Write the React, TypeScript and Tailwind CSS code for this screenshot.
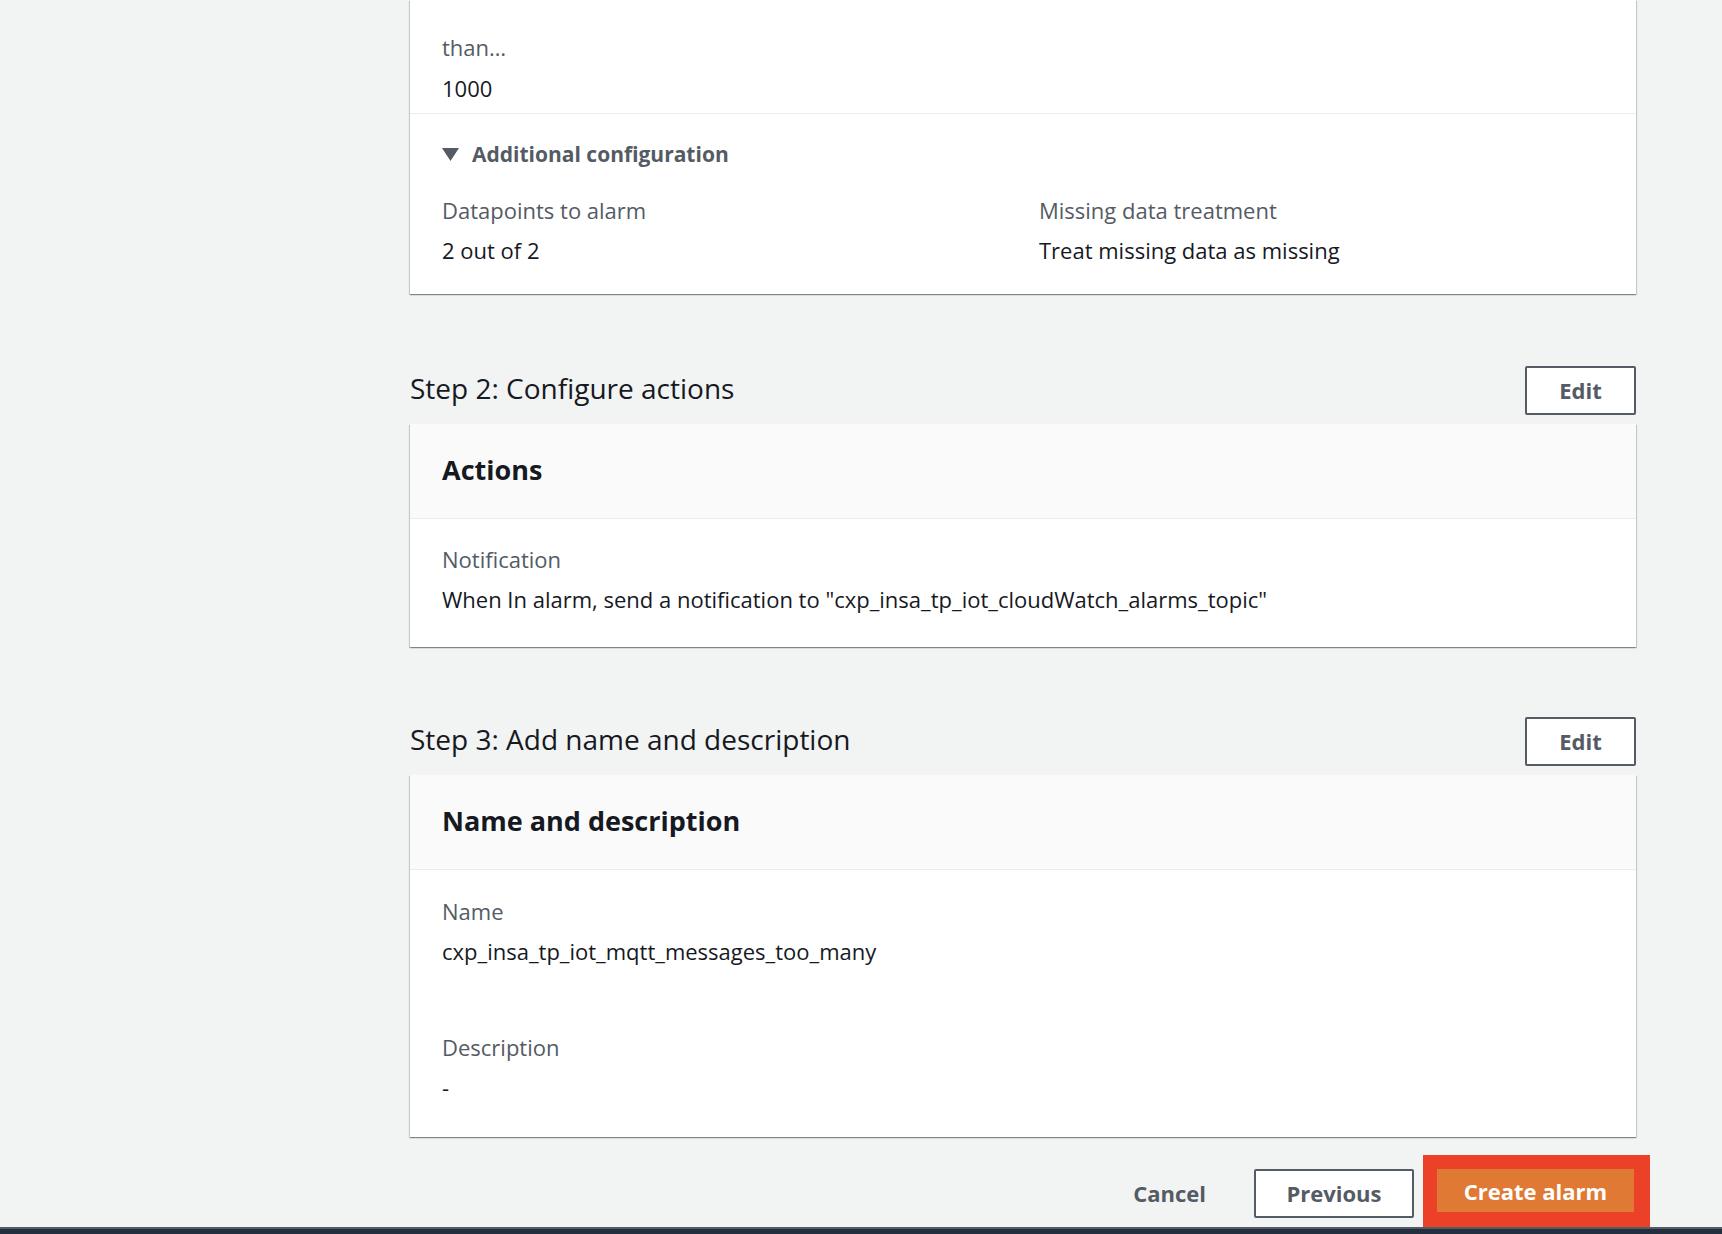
import React from "react";

const font = { fontFamily: '"Open Sans", "Noto Sans", sans-serif' };

function Field({ label, value }: { label: string; value: string }) {
  return (
    <div>
      <div className="text-[22px] leading-[30px] text-[#545b64]">{label}</div>
      <div className="mt-[10px] text-[22px] leading-[30px] text-[#16191f]">{value}</div>
    </div>
  );
}

function Card({ children, className = "" }: { children: React.ReactNode; className?: string }) {
  return (
    <div
      className={`bg-white shadow-[0_1px_1px_0_rgba(0,28,36,0.3),1px_1px_1px_0_rgba(0,28,36,0.15),-1px_1px_1px_0_rgba(0,28,36,0.15)] ${className}`}
    >
      {children}
    </div>
  );
}

function CardHeader({ title }: { title: string }) {
  return (
    <div className="flex h-[95px] items-center border-b border-[#eaeded] bg-[#fafafa] px-[32px]">
      <h2 className="mb-[2px] text-[27px] font-bold leading-[34px] text-[#16191f]">{title}</h2>
    </div>
  );
}

function StepHeader({ title }: { title: string }) {
  return (
    <div className="flex h-[49px] items-center justify-between">
      <h2 className="mb-[6px] text-[28px] leading-[36px] text-[#16191f]">{title}</h2>
      <button className="h-[49px] w-[111px] rounded-[2px] border-2 border-[#545b64] bg-white text-[22px] font-bold text-[#545b64]">
        Edit
      </button>
    </div>
  );
}

export default function App() {
  return (
    <div className="min-h-[1234px] bg-[#f2f3f3]" style={font}>
      <div className="ml-[410px] w-[1226px]">
        {/* Step 1 card (scrolled, top cut off) */}
        <Card>
          <div className="border-b border-[#eaeded] px-[32px] pt-[32px] pb-[10px]">
            <div className="text-[22px] leading-[30px] text-[#545b64]">than…</div>
            <div className="mt-[11px] text-[22px] leading-[30px] text-[#16191f]">1000</div>
          </div>
          <div className="px-[32px] pt-[25px] pb-[29px]">
            <div className="flex items-center gap-[13px] text-[21px] font-bold leading-[30px] text-[#545b64]">
              <svg width="17" height="13" viewBox="0 0 17 13">
                <polygon points="0,0 17,0 8.5,13" fill="#545b64" />
              </svg>
              Additional configuration
            </div>
            <div className="mt-[26px] grid grid-cols-2 gap-[32px]">
              <Field label="Datapoints to alarm" value="2 out of 2" />
              <Field label="Missing data treatment" value="Treat missing data as missing" />
            </div>
          </div>
        </Card>

        <div className="mt-[72px]">
          <StepHeader title="Step 2: Configure actions" />
        </div>
        <Card className="mt-[9px]">
          <CardHeader title="Actions" />
          <div className="px-[32px] pt-[25px] pb-[33px]">
            <Field
              label="Notification"
              value={'When In alarm, send a notification to "cxp_insa_tp_iot_cloudWatch_alarms_topic"'}
            />
          </div>
        </Card>

        <div className="mt-[70px]">
          <StepHeader title="Step 3: Add name and description" />
        </div>
        <Card className="mt-[9px]">
          <CardHeader title="Name and description" />
          <div className="px-[32px] pt-[26px] pb-[35px]">
            <Field label="Name" value="cxp_insa_tp_iot_mqtt_messages_too_many" />
            <div className="mt-[66px]">
              <Field label="Description" value="-" />
            </div>
          </div>
        </Card>

        <div className="mt-[32px] flex items-start justify-end">
          <button className="mr-[28px] h-[49px] px-[20px] text-[22px] font-bold text-[#545b64]">Cancel</button>
          <button className="h-[49px] w-[160px] rounded-[2px] border-2 border-[#545b64] bg-white text-[22px] font-bold text-[#545b64]">
            Previous
          </button>
          <div className="-mr-[14px] -mt-[14px] ml-[9px] bg-[#ea4128] pt-[14px] pr-[16px] pb-[15px] pl-[14px]">
            <button className="h-[43px] w-[197px] pt-[2px] bg-[#e07933] text-[22px] font-bold text-white">Create alarm</button>
          </div>
        </div>
      </div>
      <div className="h-[8px] border-t-2 border-[#545b64] bg-[#232f3e]" />
    </div>
  );
}
